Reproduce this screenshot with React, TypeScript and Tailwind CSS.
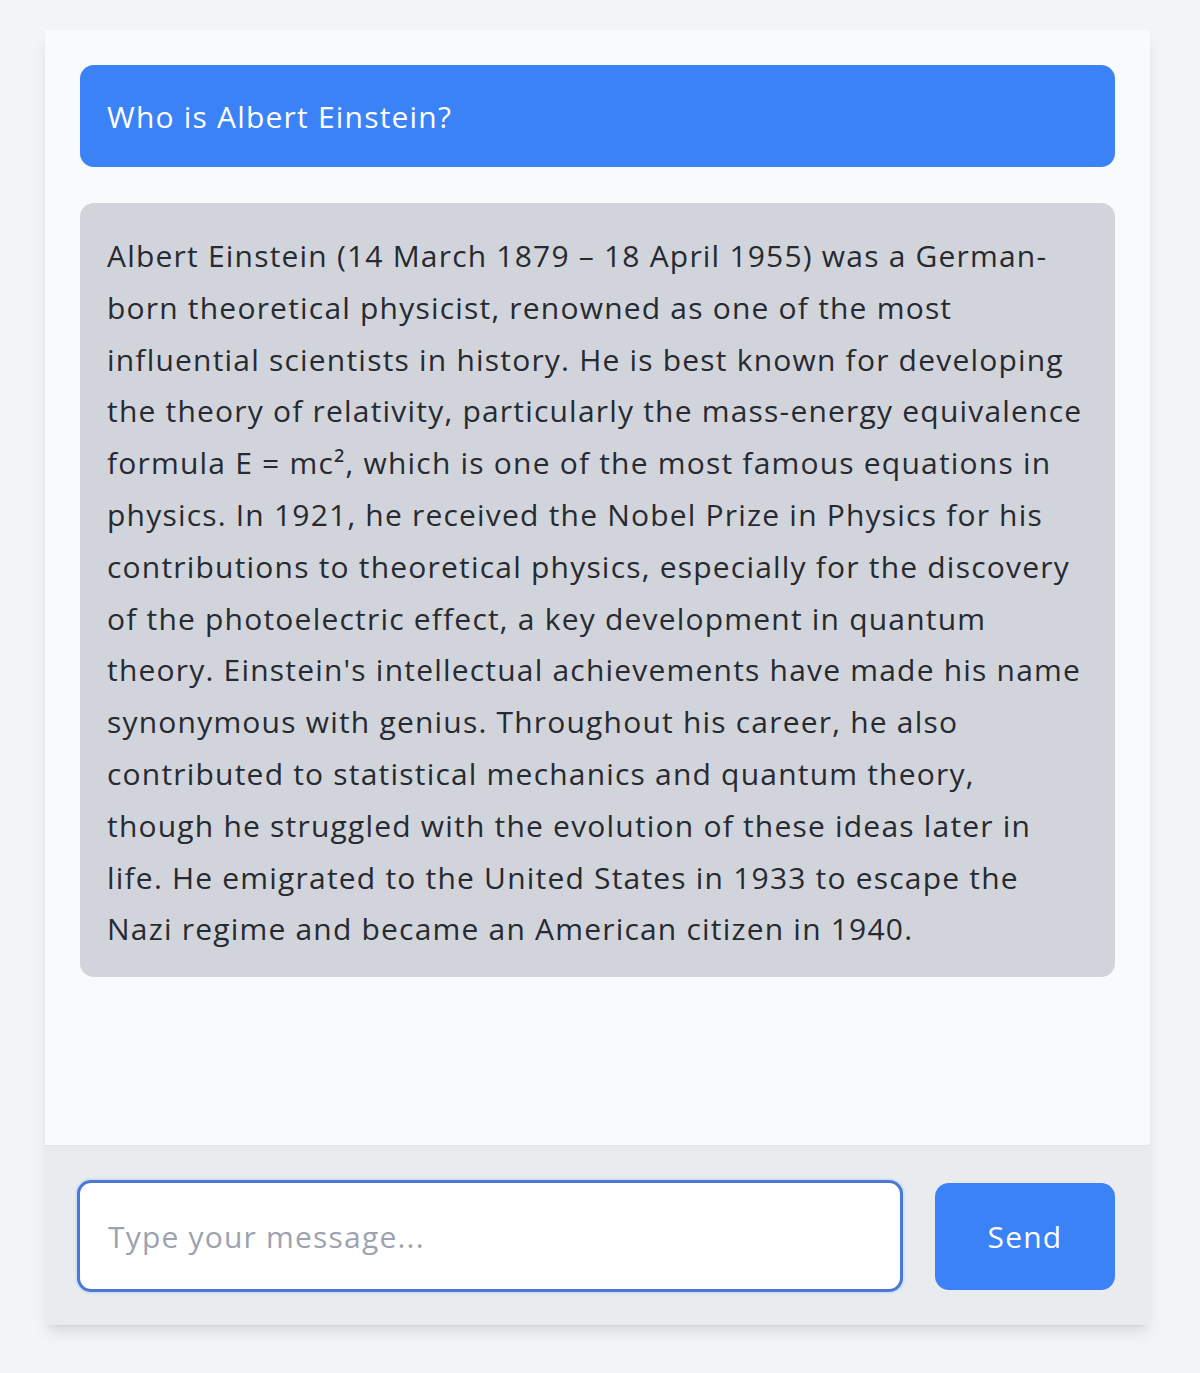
import React from 'react';

// line breaks follow the original rendering
const answerLines = [
  'Albert Einstein (14 March 1879 – 18 April 1955) was a German-',
  'born theoretical physicist, renowned as one of the most',
  'influential scientists in history. He is best known for developing',
  'the theory of relativity, particularly the mass-energy equivalence',
  'formula E = mc², which is one of the most famous equations in',
  'physics. In 1921, he received the Nobel Prize in Physics for his',
  'contributions to theoretical physics, especially for the discovery',
  'of the photoelectric effect, a key development in quantum',
  "theory. Einstein's intellectual achievements have made his name",
  'synonymous with genius. Throughout his career, he also',
  'contributed to statistical mechanics and quantum theory,',
  'though he struggled with the evolution of these ideas later in',
  'life. He emigrated to the United States in 1933 to escape the',
  'Nazi regime and became an American citizen in 1940.',
];

export default function App() {
  return (
    <div className="min-h-[1373px] bg-[#f3f4f6] pt-[30px] font-['Open_Sans',sans-serif] tracking-[1.2px]">
      <div className="ml-[45px] w-[1105px] bg-[#f9fafb] shadow-lg">
        {/* Messages */}
        <div className="flex h-[1115px] flex-col gap-9 px-[35px] pt-[35px]">
          <div className="rounded-[14px] bg-[#3b82f6] px-[27px] pb-[26px] pt-[28px] text-[30px] leading-[48px] text-white">
            Who is Albert Einstein?
          </div>
          <div className="rounded-[14px] bg-[#d1d5db] px-[27px] pb-[22px] pt-[27px] text-[30px] leading-[51.8px] text-[#272a30]">
            {answerLines.map((line) => (
              <span key={line} className="block whitespace-nowrap">
                {line}
              </span>
            ))}
          </div>
        </div>

        {/* Input bar */}
        <div className="flex items-center gap-8 border-t border-[#e2e4e8] bg-[#eaebee] pb-[33px] pl-[32px] pr-[35px] pt-[34px]">
          <input
            type="text"
            placeholder="Type your message..."
            className="h-[112px] flex-1 rounded-[14px] border-[3px] border-[#4a78d4] bg-white px-[28px] text-[30px] tracking-[1.2px] text-[#272a30] shadow-[0_0_0_2px_rgba(191,219,254,0.6)] outline-none placeholder:text-[#9ca3af]"
          />
          <button className="h-[107px] w-[180px] rounded-[14px] bg-[#3b82f6] text-[30px] tracking-[1.2px] text-white">
            Send
          </button>
        </div>
      </div>
    </div>
  );
}
